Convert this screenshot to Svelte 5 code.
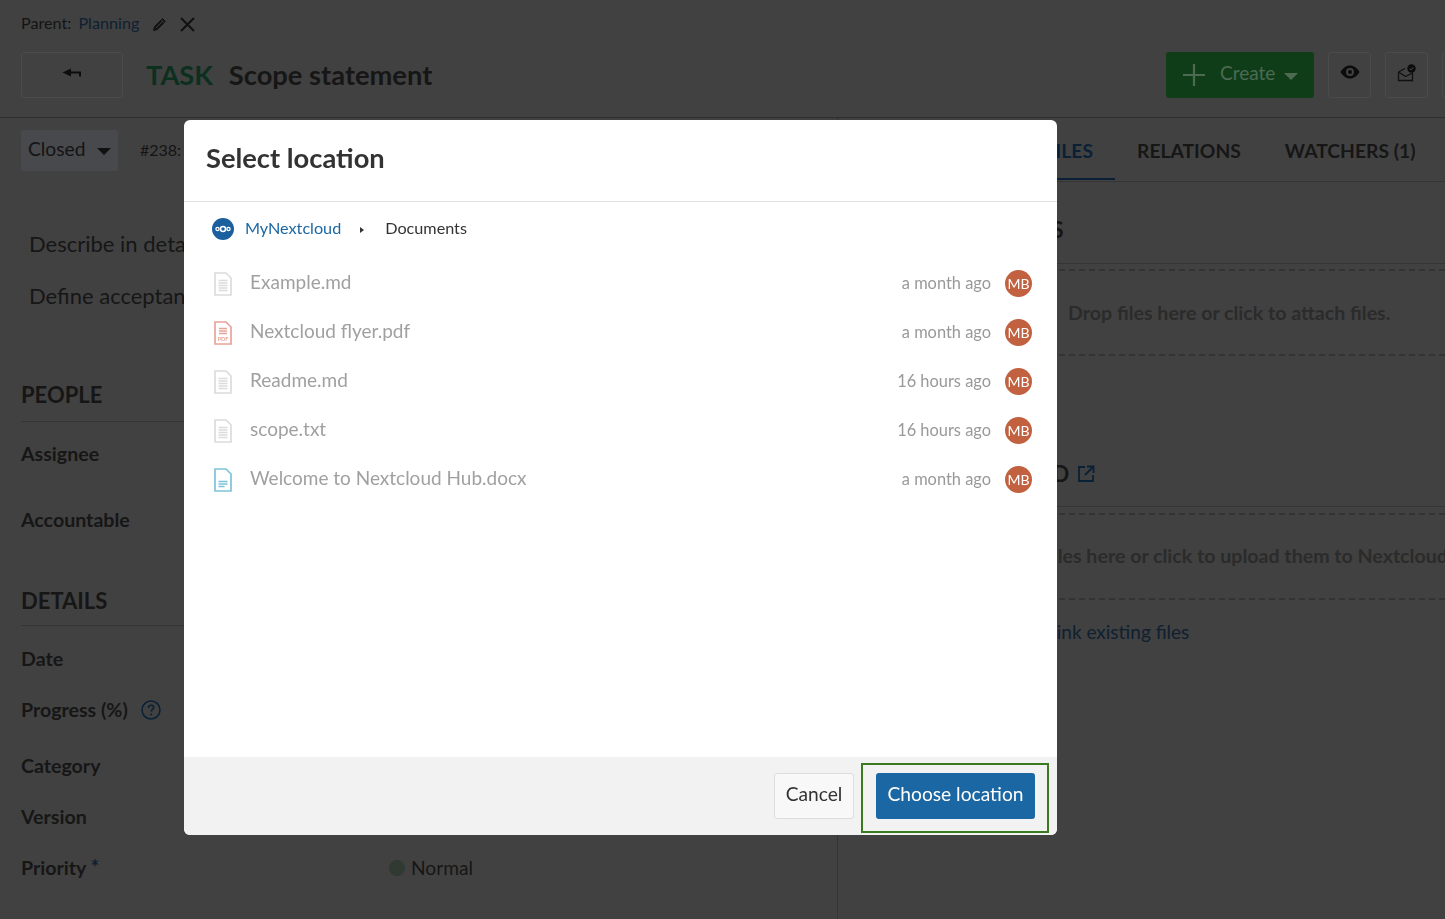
<script>
  const files = [
    { name: 'Example.md', time: 'a month ago', kind: 'text' },
    { name: 'Nextcloud flyer.pdf', time: 'a month ago', kind: 'pdf' },
    { name: 'Readme.md', time: '16 hours ago', kind: 'text' },
    { name: 'scope.txt', time: '16 hours ago', kind: 'text' },
    { name: 'Welcome to Nextcloud Hub.docx', time: 'a month ago', kind: 'doc' }
  ];
  const iconColor = { text: '#dcdcdc', pdf: '#e8a398', doc: '#7cc3d8' };
</script>

<div class="page">
  <div class="parent">
    <span>Parent:</span>
    <span class="link">Planning</span>
    <svg class="pencil" width="16" height="16" viewBox="0 0 16 16"><path d="M1.500 14.500l1-4L10.500 2.500l3 3-8 8z" fill="#141414" stroke="#141414" stroke-width="1"/><path d="M4 11.900l6.600-6.600M9.300 3.800l3 3" stroke="#414141" stroke-width=".9"/></svg>
    <svg class="close" width="15" height="15" viewBox="0 0 15 15"><path d="M1 1l13 13M14 1L1 14" stroke="#111" stroke-width="2"/></svg>
  </div>

  <div class="titlebar">
    <div class="backbtn">
      <svg width="20" height="10" viewBox="0 0 20 10"><path d="M0.500 4.500L9 .500v3h10v5h-2V5.500H9v3z" fill="#0d0d0d"/></svg>
    </div>
    <span class="type">TASK</span>
    <span class="subject">Scope statement</span>
    <div class="actions">
      <div class="create">
        <svg width="24" height="24" viewBox="0 0 24 24"><path d="M12 1v22M1 12h22" stroke="#4d6a53" stroke-width="2.200"/></svg>
        <span>Create</span>
        <i class="caret light"></i>
      </div>
      <div class="iconbtn eye">
        <svg width="20" height="14" viewBox="0 0 20 14"><path d="M.500 7c2.500-4 5.500-6.500 9.500-6.500s7 2.500 9.500 6.500c-2.500 4-5.500 6.500-9.500 6.500S3 11 .500 7z" fill="#0c0c0c"/><circle cx="10" cy="7" r="4" fill="#414141"/><circle cx="10" cy="7" r="2" fill="#0c0c0c"/></svg>
      </div>
      <div class="iconbtn mail">
        <svg width="20" height="18" viewBox="0 0 20 18"><path d="M1.500 8L8 4.500M1.500 8v8.500h14V9M1.500 8L8.500 12.500 15.500 9" fill="none" stroke="#111" stroke-width="1.300"/><circle cx="14.500" cy="4.500" r="4.200" fill="#0c0c0c"/><path d="M12.700 4.600l1.300 1.300 2.200-2.600" fill="none" stroke="#555" stroke-width=".9"/></svg>
      </div>
      <div class="iconbtn cut"></div>
    </div>
  </div>

  <div class="main">
    <div class="left">
      <div class="statusbar">
        <div class="status"><span>Closed</span><i class="caret"></i></div>
        <span class="id">#238: Task</span>
      </div>
      <p class="desc first">Describe in detail what the project will deliver.</p>
      <p class="desc second">Define acceptance criteria for the project.</p>

      <h3 class="section people">PEOPLE</h3>
      <div class="attr assignee">Assignee</div>
      <div class="attr accountable">Accountable</div>

      <h3 class="section details">DETAILS</h3>
      <div class="attr date">Date</div>
      <div class="attr progress">
        <span>Progress (%)</span>
        <svg width="20" height="20" viewBox="0 0 20 20"><circle cx="10" cy="10" r="9" fill="none" stroke="#0a2036" stroke-width="1.500"/><path d="M7.400 8c0-1.700 1.200-2.800 2.700-2.800s2.600 1 2.600 2.300c0 2-2.600 2-2.600 4" fill="none" stroke="#0a2036" stroke-width="1.600"/><circle cx="10.100" cy="14.400" r="1" fill="#0a2036"/></svg>
      </div>
      <div class="attr category">Category</div>
      <div class="attr version">Version</div>
      <div class="attr priority">
        <span class="prlabel">Priority <b>*</b></span>
        <span class="prvalue"><i class="dot"></i>Normal</span>
      </div>
    </div>

    <div class="right">
      <div class="tabs">
        <span class="tab activity">ACTIVITY</span>
        <span class="tab active">FILES</span>
        <span class="tab">RELATIONS</span>
        <span class="tab">WATCHERS (1)</span>
      </div>
      <h4 class="rhead r1">ATTACHMENTS</h4>
      <div class="drop d1">Drop files here or click to attach files.</div>
      <h4 class="rhead r2">
        <span>NEXTCLOUD</span>
        <svg width="18" height="18" viewBox="0 0 18 18"><path d="M8 2H2v14h14v-6M10 1.500h6.500V8M16 2L8 10" fill="none" stroke="#0a2036" stroke-width="1.800"/></svg>
      </h4>
      <div class="drop d2">Drop files here or click to upload them to Nextcloud</div>
      <div class="linkfiles">Link existing files</div>
    </div>
  </div>
</div>

<div class="modal">
  <header><h2>Select location</h2></header>
  <div class="body">
    <nav>
      <svg class="logo" width="22" height="22" viewBox="0 0 22 22"><circle cx="11" cy="11" r="11" fill="#1b5f9e"/><circle cx="11" cy="11" r="2.500" fill="none" stroke="#fff" stroke-width="1.500"/><circle cx="5.500" cy="11" r="1.600" fill="none" stroke="#fff" stroke-width="1.300"/><circle cx="16.500" cy="11" r="1.600" fill="none" stroke="#fff" stroke-width="1.300"/></svg>
      <span class="crumb">MyNextcloud</span>
      <i class="sep"></i>
      <span class="current">Documents</span>
    </nav>
    <ul>
      {#each files as f}
        <li>
          <svg class="ficon" width="18" height="24" viewBox="0 0 18 24">
            <path d="M1 1h11l5 5v17H1z" fill="#fff" stroke={iconColor[f.kind]} stroke-width="1.700"/>
            {#if f.kind === 'text'}
              <path d="M4.500 8.500h9M4.500 11h9M4.500 13.500h9M4.500 16h9M4.500 18.500h9" stroke="#dcdcdc" stroke-width="1.300"/>
            {:else if f.kind === 'pdf'}
              <path d="M5 7.500h8M5 10h8M5 12.500h8" stroke="#e8a398" stroke-width="1.400"/>
              <text x="9" y="20" text-anchor="middle" class="pdf">PDF</text>
            {:else}
              <path d="M4.500 13.500h9M4.500 16h9M4.500 18.500h6" stroke="#7cc3d8" stroke-width="1.400"/>
            {/if}
          </svg>
          <span class="fname">{f.name}</span>
          <span class="ftime">{f.time}</span>
          <span class="avatar">MB</span>
        </li>
      {/each}
    </ul>
  </div>
  <footer>
    <button class="cancel">Cancel</button>
    <span class="highlight"><button class="choose">Choose location</button></span>
  </footer>
</div>

<style>
  :global(body) { margin: 0; background: #414141; }
  * { box-sizing: border-box; }
  .page {
    width: 1445px; height: 919px; overflow: hidden; background: #414141;
    padding: 12px 0 0 21px; color: #161616;
    font-family: Lato, "Liberation Sans", sans-serif; font-size: 20px;
    display: flex; flex-direction: column;
  }
  .parent { display: flex; align-items: center; gap: 8px; height: 20px; font-size: 16.200px; color: #141414; margin-bottom: 2px; }
  .link { color: #0f2030; margin-right: 5px; margin-left: -1px; }
  .close { margin-left: 4px; margin-top: 4px; }
  .pencil { margin-top: 3px; }
  .titlebar { display: flex; align-items: center; margin-top: 18px; height: 45px; width: 1478px; flex: none; }
  .backbtn {
    width: 102px; height: 46px; border: 1px solid #4b4b4b; border-radius: 3px;
    display: flex; align-items: center; justify-content: center; padding-bottom: 3px; margin-right: 23px; flex: none;
  }
  .type { font-size: 27.200px; font-weight: 700; color: #0c2f20; margin-right: 16px; }
  .subject { font-size: 27.300px; font-weight: 700; color: #161616; }
  .actions { margin-left: auto; display: flex; align-items: center; }
  .create {
    width: 148px; height: 46px; background: #0f3d18; border-radius: 3px; color: #4d6a53;
    display: flex; align-items: center; padding-left: 16px; font-size: 19px; margin-right: 14px;
  }
  .create span { margin-left: 14px; padding-bottom: 5px; }
  .caret { display: inline-block; width: 0; height: 0; border: 7px solid transparent; border-top-color: #111; border-bottom: 0; }
  .caret.light { border-top-color: #4d6a53; margin-left: 9px; margin-top: 3px; }
  .iconbtn {
    width: 43px; height: 46px; border: 1px solid #4b4b4b; border-radius: 3px;
    display: flex; align-items: center; justify-content: center; margin-right: 14px; flex: none; padding-bottom: 6px;
  }
  .mail { padding-bottom: 4px; }
  .main { display: flex; flex: 1; margin-top: 20px; margin-left: -21px; border-top: 1px solid #2f2f2f; min-height: 0; }
  .left { width: 838px; border-right: 1px solid #353535; padding: 12px 20px 0 21px; flex: none; display: flex; flex-direction: column; }
  .statusbar { display: flex; align-items: center; }
  .status {
    width: 97px; height: 41px; background: #48494c; border-radius: 3px; display: flex; align-items: center;
    padding-left: 7px; color: #141414; font-size: 19.200px;
  }
  .status span { padding-bottom: 5px; }
  .status .caret { margin-left: 12px; margin-top: 2px; }
  .id { margin-left: 22px; font-size: 16px; color: #141414; padding-bottom: 2px; }
  .desc { margin: 0 0 0 8px; font-size: 22px; color: #161616; line-height: 28px; }
  .first { margin-top: 59px; }
  .second { margin-top: 24px; }
  .section {
    margin: 0; font-size: 22px; font-weight: 700; color: #161616; line-height: 28px;
    border-bottom: 1px solid #353535; height: 39px;
  }
  .people { margin-top: 71px; height: 41px; }
  .attr { font-size: 19.600px; font-weight: 700; line-height: 24px; color: #161616; }
  .assignee { margin-top: 20px; }
  .accountable { margin-top: 42px; }
  .details { margin-top: 55px; }
  .date { margin-top: 21px; }
  .progress { margin-top: 27px; display: flex; align-items: center; gap: 13px; }
  .category { margin-top: 32px; }
  .version { margin-top: 27px; }
  .priority { margin-top: 26px; display: flex; align-items: center; }
  .prlabel { width: 368px; }
  .prlabel b { color: #0f2030; font-size: 20px; font-weight: 700; }
  .prvalue { font-weight: 400; font-size: 19.200px; display: flex; align-items: center; gap: 6px; }
  .dot { width: 16px; height: 16px; border-radius: 50%; background: #303a32; }
  .right { flex: 1; display: flex; flex-direction: column; padding-left: 1px; min-width: 0; }
  .tabs { display: flex; height: 64px; border-bottom: 1px solid #353535; font-size: 19.300px; font-weight: 700; color: #161616; flex: none; }
  .tab { padding: 21px 22px 0; height: 62px; white-space: nowrap; }
  .tab.activity { width: 150px; }
  .tab.active { width: 126px; text-align: right; color: #0a2036; border-bottom: 2px solid #0a2036; }
  .rhead { margin: 0; font-size: 22px; font-weight: 700; color: #161616; line-height: 28px; white-space: nowrap; height: 39px; border-bottom: 1px solid #353535; }
  .r1 { margin-top: 34px; padding-left: 64px; height: 48px; }
  .r2 { margin-top: 103px; padding-left: 97px; display: flex; align-items: flex-start; gap: 8px; height: 48px; padding-top: 1px; }
  .r2 svg { margin-top: 5px; }
  .drop {
    margin-top: 5px; height: 87px; border-top: 2px dashed #333; border-bottom: 2px dashed #333;
    font-size: 19.600px; font-weight: 700; color: #2b2b2b; white-space: nowrap; padding: 30px 0 0 229px;
  }
  .d2 { padding-left: 158px; margin-top: 6px; padding-top: 29px; }
  .linkfiles { margin: 20px 0 0 208px; color: #0f2030; font-size: 19px; font-weight: 400; }

  .modal {
    position: fixed; left: 184px; top: 120px; width: 873px; height: 715px; background: #fff;
    border-radius: 6px; overflow: hidden; display: flex; flex-direction: column;
    font-family: Lato, "Liberation Sans", sans-serif;
  }
  header { height: 82px; border-bottom: 1px solid #e0e0e0; padding: 20px 22px 0; flex: none; }
  h2 { margin: 0; font-size: 27.300px; line-height: 36px; font-weight: 700; color: #333; }
  .body { flex: 1; padding: 16px 25px 0 28px; min-height: 0; }
  nav { display: flex; align-items: center; height: 22px; font-size: 16.200px; }
  nav span { padding-bottom: 4px; }
  .logo { margin-right: 11px; flex: none; }
  .crumb { color: #1b67a3; }
  .sep { width: 0; height: 0; border: 3.500px solid transparent; border-left: 4px solid #333; border-right: 0; margin: 1px 21px 0 19px; }
  .current { color: #333; }
  ul { list-style: none; margin: 19px 0 0; padding: 0; }
  li { height: 49px; display: flex; align-items: center; }
  .ficon { margin-left: 2px; flex: none; }
  .pdf { font: 700 5.500px Lato, sans-serif; fill: #e8a398; }
  .fname { margin-left: 18px; font-size: 19px; color: #a0a0a0; padding-bottom: 5px; }
  .ftime { margin-left: auto; font-size: 16.400px; color: #999; margin-right: 1px; padding-bottom: 2px; }
  .avatar {
    width: 27px; height: 27px; border-radius: 50%; background: #c1613f; color: #fff; font-size: 14px; margin-left: 13px;
    display: flex; align-items: center; justify-content: center; flex: none;
  }
  footer { height: 78px; background: #f2f2f2; flex: none; display: flex; align-items: flex-start; padding: 16px 0 0 590px; }
  button { font-family: inherit; font-size: 19.200px; height: 46px; border-radius: 3px; cursor: pointer; padding: 0 0 5px; }
  .cancel { width: 80px; background: #f8f8f8; border: 1px solid #ddd; color: #333; }
  .highlight { position: relative; margin-left: 22px; display: block; }
  .highlight::after {
    content: ""; position: absolute; box-sizing: border-box; left: -15px; top: -10px; width: 188px; height: 70px;
    border: 2px solid #3c7a22; pointer-events: none;
  }
  .choose { width: 159px; background: #1b67a3; border: 0; color: #fff; display: block; }
</style>
